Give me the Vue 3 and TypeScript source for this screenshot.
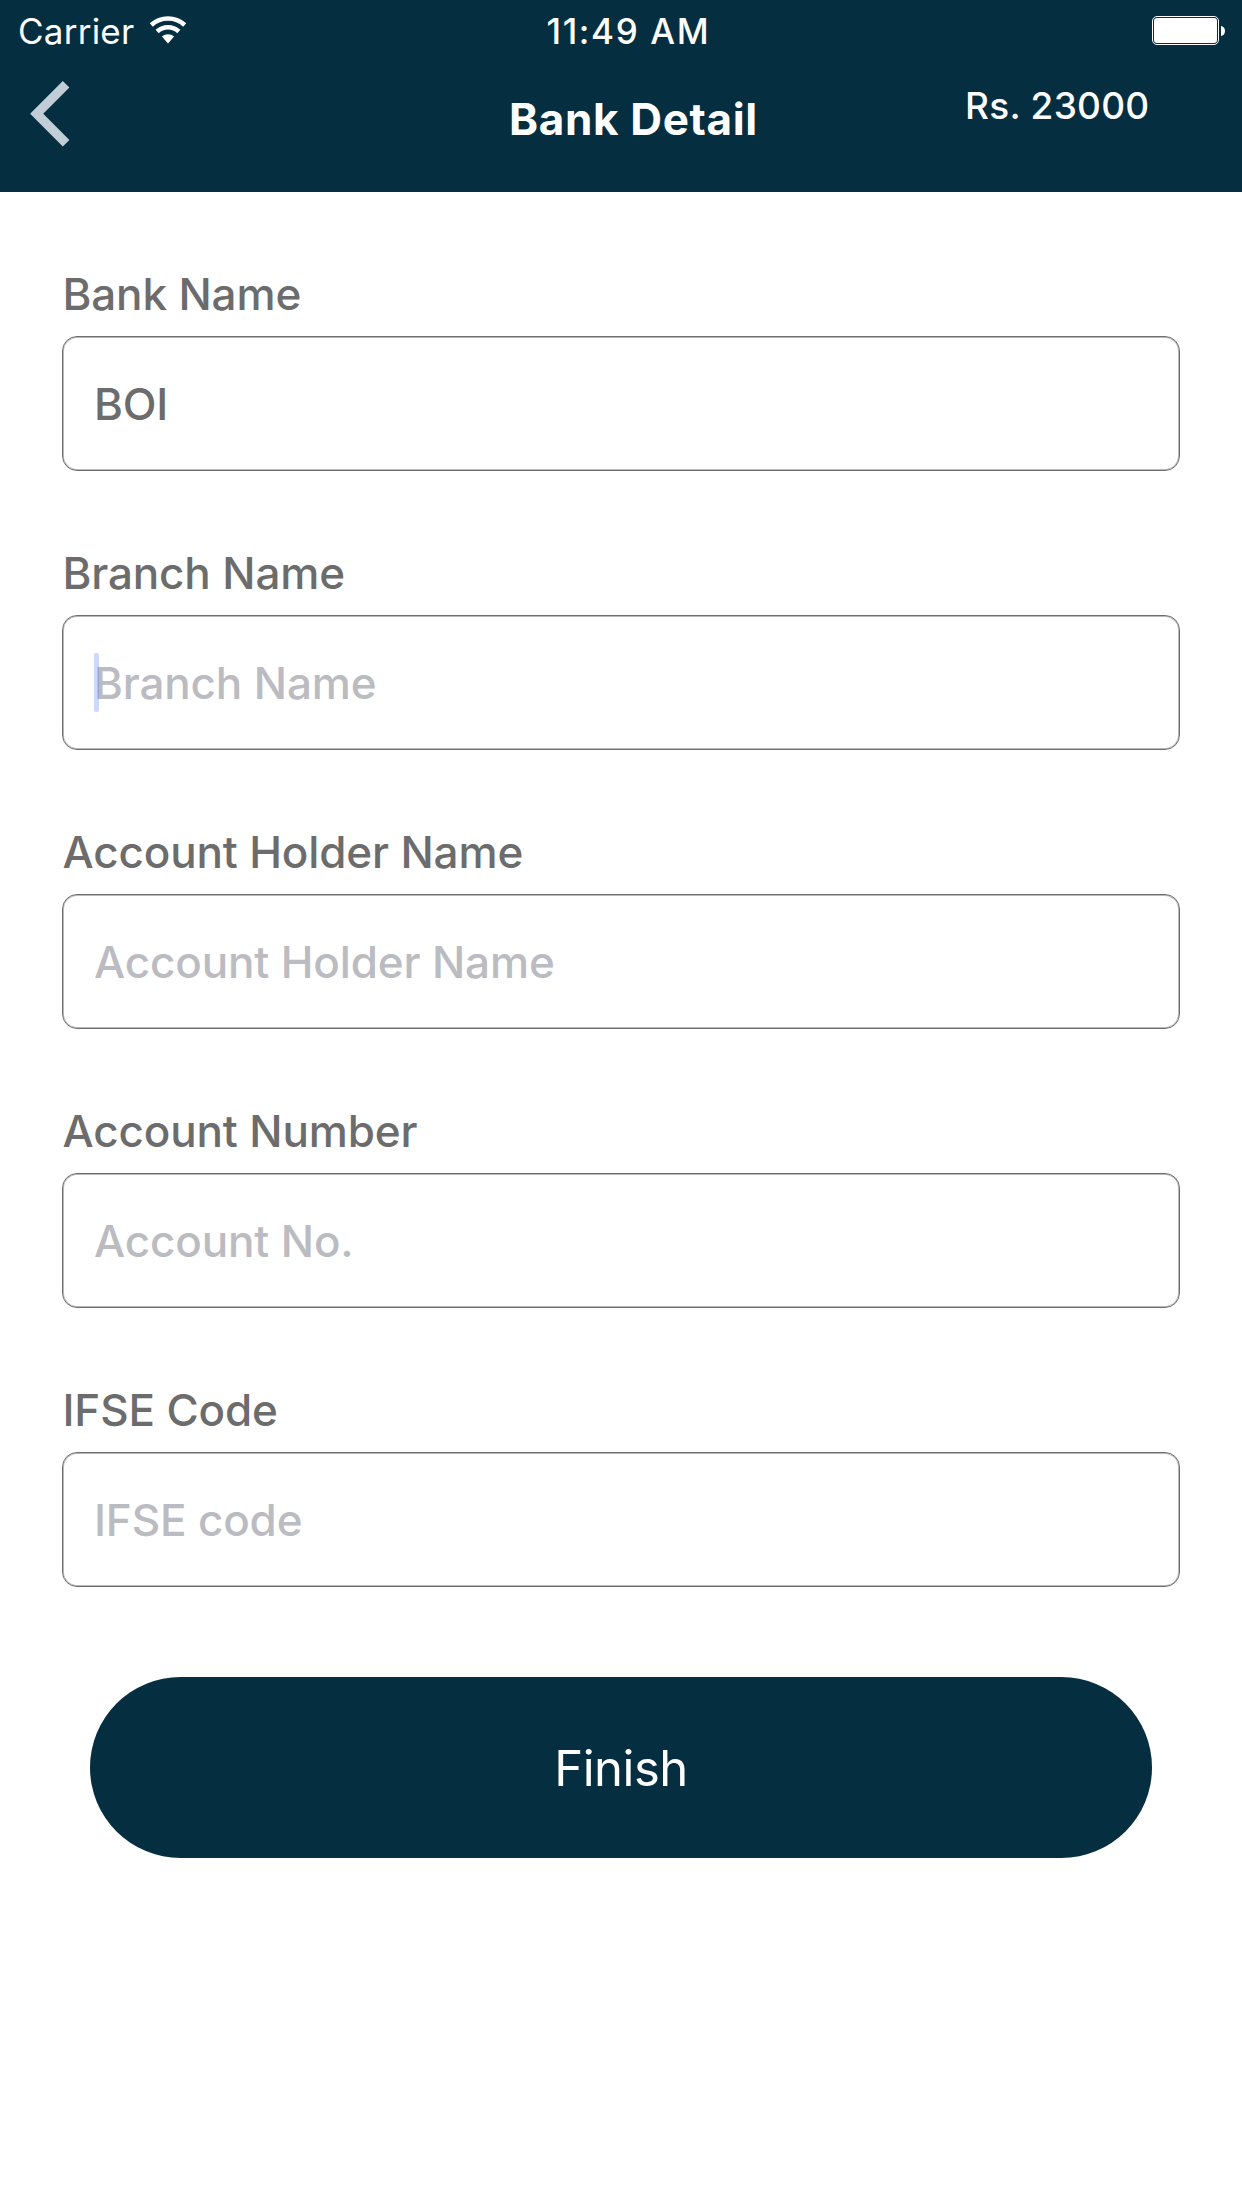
<script setup lang="ts">
import { reactive } from 'vue'

interface Field {
  id: string
  label: string
  placeholder: string
  value: string
  focused?: boolean
}

const fields = reactive<Field[]>([
  { id: 'bank', label: 'Bank Name', placeholder: 'Bank Name', value: 'BOI' },
  { id: 'branch', label: 'Branch Name', placeholder: 'Branch Name', value: '', focused: true },
  { id: 'holder', label: 'Account Holder Name', placeholder: 'Account Holder Name', value: '' },
  { id: 'number', label: 'Account Number', placeholder: 'Account No.', value: '' },
  { id: 'ifse', label: 'IFSE Code', placeholder: 'IFSE code', value: '' },
])
</script>

<template>
  <div class="screen">
    <header class="top">
      <div class="status">
        <div class="carrier">
          <span>Carrier</span>
          <svg class="wifi" width="38" height="28" viewBox="0 0 38 28" aria-hidden="true">
            <g fill="none" stroke="#fff" stroke-width="4.6">
              <path d="M2.27 8.92A25 25 0 0 1 35.73 8.92" />
              <path d="M8.16 15.46A16.2 16.2 0 0 1 29.84 15.46" />
            </g>
            <path d="M19 27.5L12.9 20.5A9.3 9.3 0 0 1 25.1 20.5Z" fill="#fff" />
          </svg>
        </div>
        <span class="time">11:49 AM</span>
        <svg class="battery" width="73" height="29" viewBox="0 0 73 29" aria-hidden="true">
          <rect x="0.5" y="0.5" width="66" height="28" rx="4.5" fill="none" stroke="#fff" />
          <rect x="2" y="2" width="63" height="25" rx="3" fill="#fff" />
          <path d="M69 10C71.2 10.2 73 12 73 15S71.2 19.8 69 20Z" fill="#fff" />
        </svg>
      </div>
      <div class="nav">
        <button class="back" type="button" aria-label="Back">
          <svg width="40" height="66" viewBox="0 0 40 66" aria-hidden="true">
            <path d="M36.1 3.3L6.7 32.8L36.1 62.3" fill="none" stroke="#c2ced5" stroke-width="9.3" />
          </svg>
        </button>
        <h1 class="title">Bank Detail</h1>
        <span class="amount">Rs. 23000</span>
      </div>
    </header>

    <form class="form" @submit.prevent>
      <div v-for="f in fields" :key="f.id" class="field">
        <label class="label" :for="f.id">{{ f.label }}</label>
        <div class="box">
          <input :id="f.id" v-model="f.value" class="input" type="text" :placeholder="f.placeholder" />
          <span v-if="f.focused" class="caret"></span>
        </div>
      </div>
      <button class="finish" type="submit">Finish</button>
    </form>
  </div>
</template>

<style>
body {
  background: #fff;
}
</style>

<style scoped>
.screen {
  width: 1242px;
  height: 2208px;
  background: #fff;
  font-family: Inter, 'Liberation Sans', sans-serif;
  box-sizing: border-box;
}
.top {
  height: 192px;
  background: #052f40;
  color: #fff;
}
.status {
  display: grid;
  grid-template-columns: 528.5px 605.5px 73px;
  height: 62px;
  padding-left: 18px;
  font-size: 35px;
  line-height: 62px;
}
.carrier {
  display: flex;
  font-weight: 400;
  letter-spacing: 0.24px;
}
.carrier span {
  width: 131.3px;
}
.wifi {
  margin-top: 15.6px;
}
.time {
  font-weight: 500;
  letter-spacing: 1.64px;
}
.battery {
  margin-top: 16px;
}
.nav {
  display: grid;
  grid-template-columns: 479px 456px 1fr;
  padding-left: 30px;
  align-items: start;
}
.back {
  display: flex;
  margin: 19px 0 0;
  padding: 0;
  border: 0;
  background: none;
}
.title {
  margin: 0;
  font-size: 44px;
  font-weight: 700;
  line-height: 114px;
  letter-spacing: 0.65px;
}
.amount {
  font-size: 37px;
  font-weight: 500;
  line-height: 87px;
  letter-spacing: 0.25px;
}
.form {
  display: flex;
  flex-direction: column;
  gap: 74px;
  padding: 74px 62px 0;
}
.field {
  display: flex;
  flex-direction: column;
  gap: 14px;
}
.label,
.input {
  font-family: inherit;
  font-size: 44px;
  font-weight: 500;
  letter-spacing: -0.14px;
  color: #6c6c6c;
}
.label {
  padding-left: 0.5px;
  line-height: 56px;
}
.box {
  position: relative;
  display: flex;
  height: 135px;
}
.input {
  flex: 1;
  min-width: 0;
  box-sizing: border-box;
  height: 135px;
  margin: 0;
  padding: 0 31px;
  border: 1px solid #6e6e6e;
  border-radius: 15px;
  box-shadow: inset 0 0 0 1px #b9b9b9;
  background: #fff;
  outline: none;
}
.input::placeholder {
  color: #bbbbc2;
  opacity: 1;
}
.caret {
  position: absolute;
  left: 32px;
  top: 38px;
  width: 5px;
  height: 59px;
  border-radius: 2px;
  background: rgba(66, 100, 250, 0.26);
}
.finish {
  height: 181px;
  margin: 16px 28px 0;
  padding: 1px 0 0;
  border: 0;
  border-radius: 91px;
  background: #052f40;
  color: #fff;
  font-family: inherit;
  font-size: 49px;
  font-weight: 400;
  letter-spacing: -0.5px;
}
</style>
